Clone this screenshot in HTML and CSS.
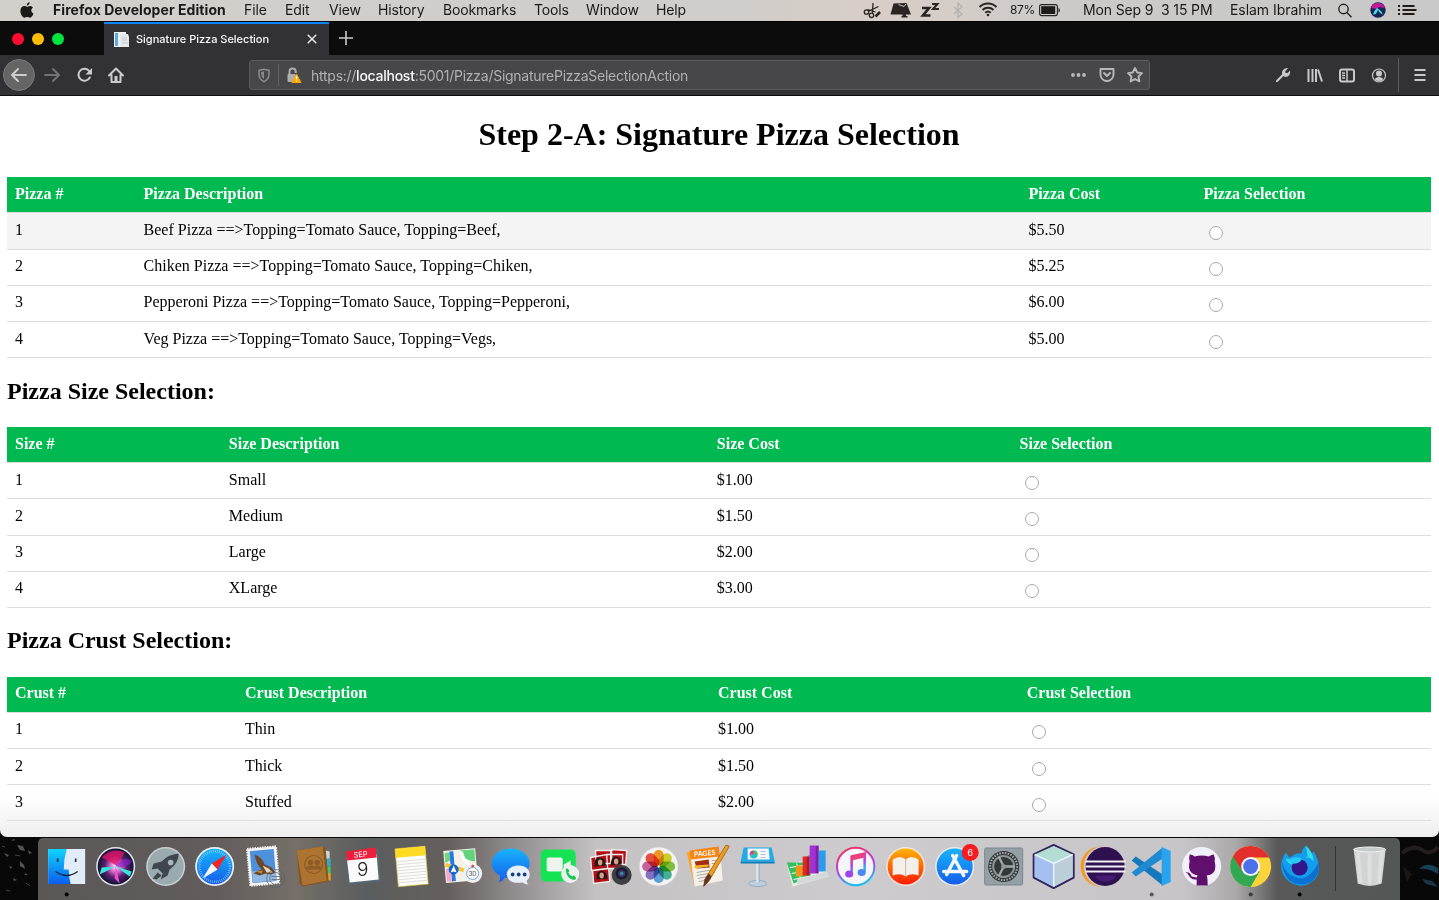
FILE: index.html
```html
<!DOCTYPE html>
<html lang="en">
<head>
<meta charset="utf-8">
<title>Signature Pizza Selection</title>
<link rel="stylesheet" href="styles.css">
</head>
<body>
<header class="menubar">
  <svg class="apple" viewBox="0 0 14 17"><path fill="#1d1917" d="M9.700 .3c.1 1.700-1.400 3.200-2.900 3.200C6.600 1.900 8.100.5 9.700.3zM7 4.700c.8 0 1.600-.8 3-.8 1.200 0 2.300.7 3 1.600-2.500 1.500-2.100 4.900.5 5.900-.6 1.700-2 4.300-3.600 4.300-1 0-1.400-.6-2.700-.6s-1.800.6-2.700.6C2.400 15.700.4 12 .4 9c0-3.200 2-4.900 3.900-4.900 1.200 0 2 .6 2.700.6z"/></svg>
  <span class="m app">Firefox Developer Edition</span>
  <span class="m w-file">File</span><span class="m w-edit">Edit</span><span class="m w-view">View</span><span class="m w-history">History</span><span class="m w-bookmarks">Bookmarks</span><span class="m w-tools">Tools</span><span class="m w-window">Window</span><span class="m">Help</span>
  <svg class="status" viewBox="862 0 142 21" fill="none" stroke="#2a2522">
    <g stroke-width="1.300"><path d="M869 11l9.500-4.500M873 3l-.5 10M867.500 9.500l8 2.500"/><circle cx="866.500" cy="12" r="2.200"/><circle cx="871.500" cy="15.300" r="2.200"/><path stroke-width="2.600" d="M875.500 16.500l4.500-4.500"/></g>
    <path fill="#2a2522" stroke="none" d="M892 3.500l13-.5 4.500 11.500h-5v1.500h1.500v1.500h-6V16h1v-1.500h-12z" transform="translate(1.500 0)"/><path stroke="#cfcac5" d="M898.500 4.500l5.500 2 2-2.500"/>
    <path stroke-width="2.700" stroke-linejoin="miter" d="M922 8h7l-6 7.500h7.500"/><path stroke-width="2" d="M932 4h5.500l-4.500 5h6"/>
    <path stroke="#b3afac" stroke-width="1.100" d="M954 7l8 7-4 3.500V3l4 3.500-8 7.500"/>
    <g stroke-width="2"><path d="M979.500 7a12 12 0 0 1 17 0M982.500 10a8 8 0 0 1 11 0M985.300 12.700a4 4 0 0 1 5.400 0"/></g><circle cx="988" cy="15" r="1.300" fill="#2a2522" stroke="none"/>
  </svg>
  <span class="m pct">87%</span>
  <svg class="battery" viewBox="0 0 22 13"><rect x=".6" y=".6" width="17.800" height="11" rx="2" fill="none" stroke="#2a2522" stroke-width="1.100"/><rect x="2.200" y="2.200" width="14" height="7.800" fill="#1e1b19"/><path d="M19.500 4v4.500q1.300-.5 1.300-2.200T19.500 4z" fill="#1e1b19"/></svg>
  <span class="m date">Mon Sep 9&nbsp; 3 15 PM</span>
  <span class="m user">Eslam Ibrahim</span>
  <svg class="tray" viewBox="1336 0 90 21"><g fill="none" stroke="#2a2522" stroke-width="1.400"><circle cx="1343.500" cy="9" r="4.700"/><path d="M1347 12.500l4.500 4.800"/></g><circle cx="1378" cy="10" r="7.700" fill="#172455"/><path d="M1371 8q1-5 7-5 5 0 7 5l-6-1-2 2z" fill="#c4189b"/><path d="M1373 14.500q1-4 4-6.500 4 2 6 6.500l-3-1.500-2-3-2 4z" fill="#45dce2"/><g fill="#1e1b19"><path d="M1398 5h2v2h-2zM1398 9h2v2h-2zM1398 13h2v2h-2zM1402.500 5h12v2h-12zM1402.500 9h14v2h-14zM1402.500 13h12v2h-12z"/></g></svg>
</header>
<div class="tabs">
  <div class="lights"><i class="red"></i><i class="amber"></i><i class="green"></i></div>
  <div class="tab">
    <svg class="favicon" viewBox="0 0 16 16"><path d="M0 0h12v15H0z" fill="#edf2f5"/><path d="M1 1h3v13H1z" fill="#5caadf"/><path d="M6 2h8l1 3v10H6z" fill="#e8e8e8"/><path d="M8 6h5M8 8h5M8 11h6" stroke="#c2cad0"/></svg>
    <span class="title">Signature Pizza Selection</span>
    <svg class="close" viewBox="0 0 10 10"><path d="M.7.700l8.600 8.600M9.300.7L.7 9.300" stroke="#e9e9ea" stroke-width="1.500"/></svg>
  </div>
  <svg class="plus" viewBox="0 0 14 14"><path d="M7 0v14M0 7h14" stroke="#c9c9ca" stroke-width="1.600"/></svg>
</div>
<div class="toolbar">
  <svg class="nav" viewBox="0 55 130 40" fill="none" stroke="#cdcdce" stroke-width="2" stroke-linecap="round" stroke-linejoin="round">
    <circle cx="19" cy="75" r="15.500" fill="#656566" stroke="#7a7a7b" stroke-width="1"/>
    <path d="M26 75H12M18 69l-6 6 6 6"/>
    <path stroke="#737374" d="M45 75h14M53 69l6 6-6 6"/>
    <path d="M89.500 71.500a6 6 0 1 0 .3 6"/><path fill="#cdcdce" stroke="none" d="M92 68v6.500h-6.500z"/>
    <path d="M109 75.500l7-7 7 7M111.500 75v7h9v-7"/><path fill="#cdcdce" stroke="none" d="M114.500 76h3v6h-3z"/>
  </svg>
  <div class="urlbar">
    <svg class="lock" viewBox="249 60 56 30"><path d="M264 69.200l5 1.200v3.800q0 5-5 7.300-5-2.300-5-7.300v-3.800z" fill="none" stroke="#8a8a8b" stroke-width="1.500"/><path d="M264 71.500v7.500q-2.800-1.800-2.800-5V72z" fill="#8a8a8b"/><path d="M278.500 64v22" stroke="#616164"/><path d="M289.500 74v-2.500a3 3 0 0 1 6.200 0V73" fill="none" stroke="#aeaeaf" stroke-width="2"/><rect x="287.500" y="74" width="8" height="8" rx="1" fill="#aeaeaf"/><path d="M296.500 74l4.500 8.500h-9z" fill="#ffa600" stroke="#ffa600" stroke-linejoin="round"/><path d="M296.500 76v3.500M296.500 80.500v1.300" stroke="#fff" stroke-width="1.300"/></svg>
    <span class="url">https://<b>localhost</b>:5001/Pizza/SignaturePizzaSelectionAction</span>
    <svg class="page-actions" viewBox="1068 60 78 30" fill="none" stroke="#b8b8b9" stroke-width="1.900"><g fill="#b8b8b9" stroke="none"><circle cx="1073" cy="75" r="1.900"/><circle cx="1078.500" cy="75" r="1.900"/><circle cx="1084" cy="75" r="1.900"/></g><path stroke-linejoin="round" d="M1100.500 69h13v5.500a6.500 6.500 0 0 1-13 0z"/><path stroke-linecap="round" stroke-linejoin="round" d="M1104 73l3 3 3-3"/><path stroke-linejoin="round" d="M1135 68l2.200 4.500 4.800.6-3.500 3.400.9 4.900-4.400-2.400-4.400 2.400.9-4.900-3.500-3.400 4.800-.6z"/></svg>
  </div>
  <svg class="tools" viewBox="1270 55 169 40" fill="none" stroke="#c8c8c9" stroke-width="2">
    <path stroke-linecap="round" stroke-width="2.200" d="M1277 81l7-7"/><path fill="#c8c8c9" stroke="none" d="M1282 75q-1-6 5-7l1 .2-2.700 3 .3 1.700 2 .2 2.500-2.600q.8 6-5 6.500z"/>
    <path d="M1308.500 69v13M1312.500 69v13M1316 69v13M1318 69.500l4 12"/>
    <rect x="1340" y="69.500" width="14" height="12" rx="2"/><path d="M1347 70v11" stroke-width="1.500"/><path stroke-width="1.300" d="M1342 73h3M1342 75.500h3M1342 78h3"/>
    <circle cx="1379" cy="75.500" r="6.500" stroke-width="1.200"/><g fill="#c8c8c9" stroke="none"><circle cx="1379" cy="73.500" r="3"/><path d="M1374.500 79q2-2 4.500-2t4.500 2q-1.800 2.300-4.500 2.300t-4.500-2.300z"/></g>
    <path stroke="#5c5c5e" stroke-width="1" d="M1398.500 58v34"/><path d="M1414.500 70h11M1414.500 75h11M1414.500 80h11"/>
  </svg>
</div>
<main class="page">
  <h1>Step 2-A: Signature Pizza Selection</h1>
  <table class="pizza">
    <thead><tr><th>Pizza #</th><th>Pizza Description</th><th>Pizza Cost</th><th>Pizza Selection</th></tr></thead>
    <tbody>
    <tr class="tall hover"><td>1</td><td>Beef Pizza ==&gt;Topping=Tomato Sauce, Topping=Beef,</td><td>$5.50</td><td><input type="radio" name="pizza"></td></tr>
    <tr><td>2</td><td>Chiken Pizza ==&gt;Topping=Tomato Sauce, Topping=Chiken,</td><td>$5.25</td><td><input type="radio" name="pizza"></td></tr>
    <tr><td>3</td><td>Pepperoni Pizza ==&gt;Topping=Tomato Sauce, Topping=Pepperoni,</td><td>$6.00</td><td><input type="radio" name="pizza"></td></tr>
    <tr class="low"><td>4</td><td>Veg Pizza ==&gt;Topping=Tomato Sauce, Topping=Vegs,</td><td>$5.00</td><td><input type="radio" name="pizza"></td></tr>
    </tbody>
  </table>
  <h2>Pizza Size Selection:</h2>
  <table class="size">
    <thead><tr><th>Size #</th><th>Size Description</th><th>Size Cost</th><th>Size Selection</th></tr></thead>
    <tbody>
    <tr class="low"><td>1</td><td>Small</td><td>$1.00</td><td><input type="radio" name="size"></td></tr>
    <tr class="tall low"><td>2</td><td>Medium</td><td>$1.50</td><td><input type="radio" name="size"></td></tr>
    <tr><td>3</td><td>Large</td><td>$2.00</td><td><input type="radio" name="size"></td></tr>
    <tr><td>4</td><td>XLarge</td><td>$3.00</td><td><input type="radio" name="size"></td></tr>
    </tbody>
  </table>
  <h2 class="second">Pizza Crust Selection:</h2>
  <table class="crust">
    <thead><tr><th>Crust #</th><th>Crust Description</th><th>Crust Cost</th><th>Crust Selection</th></tr></thead>
    <tbody>
    <tr><td>1</td><td>Thin</td><td>$1.00</td><td><input type="radio" name="crust"></td></tr>
    <tr class="low"><td>2</td><td>Thick</td><td>$1.50</td><td><input type="radio" name="crust"></td></tr>
    <tr class="low"><td>3</td><td>Stuffed</td><td>$2.00</td><td><input type="radio" name="crust"></td></tr>
    </tbody>
  </table>
</main>
<footer class="desktop">
  <svg class="rocks-l" viewBox="0 0 38 62"><g fill="#666"><path d="M11 2l4-1-1 2zM17 7l6 1 2 5-5-1zM4 15l5 2-2 2zM20 23l4 4 1 4-5-3zM9 28l3 1-1 2zM28 12l4 3-3 1zM13 40l4 2-3 1zM25 35l3 2h-3z" opacity=".8"/><path d="M2 8l3 1M26 45l4 3M6 52l4 1M15 17l5 1" stroke="#444"/></g></svg>
  <svg class="rocks-r" viewBox="0 0 39 62"><path d="M2 15q12-9 20-3t16-3" stroke="#241d1d" stroke-width="4" fill="none"/><path d="M19 31q8-8 19-1v6q-9-6-19-5z" fill="#174056"/><path d="M22 41l10 2 6 6-12-3z" fill="#1b3549"/><path d="M3 28l9 8-5 8z" fill="#1c1717"/></svg>
  <nav class="dock">
    <!-- Finder -->
    <svg class="ic" viewBox="-24.670 -28.500 49.340 62"><defs><linearGradient id="fa" x2="0" y2="1"><stop stop-color="#0fd5fb"/><stop offset="1" stop-color="#0b5ef0"/></linearGradient><linearGradient id="gb" x2="0" y2="1"><stop stop-color="#18b4fd"/><stop offset="1" stop-color="#155de9"/></linearGradient><linearGradient id="gr" x2="0" y2="1"><stop stop-color="#ffb400"/><stop offset="1" stop-color="#ff1a05"/></linearGradient></defs><rect x="-18.500" y="-17.500" width="37" height="35" fill="#e2ecf8"/><path d="M-18.500-17.500H0Q-3-7-3 3H2Q2 10 4 17.500H-18.500z" fill="url(#fa)"/><path d="M-9-8v3.500M9-8v3.500" stroke="#1a2b40" stroke-width="1.600"/><path d="M-11 5Q0 13 11 5" fill="none" stroke="#12223a" stroke-width="1.500"/><circle cy="28" r="2" fill="#000"/></svg>
    <!-- Siri -->
    <svg class="ic" viewBox="-24.670 -28.500 49.340 62"><defs><radialGradient id="si"><stop stop-color="#fff"/><stop offset=".25" stop-color="#ef7adb"/><stop offset=".6" stop-color="#5b226f"/><stop offset="1" stop-color="#0e1234"/></radialGradient></defs><circle r="19.500" fill="#e8e8ea"/><circle r="18" fill="url(#si)"/><path d="M-14-9Q-4-20 9-14L1-1z" fill="#e01568" opacity=".8"/><path d="M0-1Q10-12 16-5 12 2 0 0z" fill="#8b1fc4" opacity=".7"/><path d="M0 0L-16 8-14 1zM0 0l16 5-2 5z" fill="#37e4de"/><path d="M0-1l4 18-5-5z" fill="#f14fd1"/></svg>
    <!-- Launchpad -->
    <svg class="ic" viewBox="-24.670 -28.500 49.340 62"><circle r="19.500" fill="#c8d0d2"/><circle r="18" fill="#9aabb0"/><path d="M13-13Q2-12-4-5L-12-3-14 3-8 2-3 7-5 13 2 9 4 3Q13-3 13-13z" fill="#3e474b"/><path d="M-8 6L-4 9-9 13-13 12z" fill="#3e474b"/><circle cx="5" cy="-4" r="2.800" fill="#a9b8bd"/></svg>
    <!-- Safari -->
    <svg class="ic" viewBox="-24.670 -28.500 49.340 62"><circle r="19.500" fill="#edf0f2"/><circle r="17.800" fill="url(#gb)"/><circle r="15.300" fill="none" stroke="#9edcff" stroke-width="2.500" stroke-dasharray=".6 1.400"/><path d="M12-12L3 3-3-3z" fill="#f32424"/><path d="M-12 12L-3-3 3 3z" fill="#f5f6f8"/></svg>
    <!-- Mail -->
    <svg class="ic" viewBox="-24.670 -28.500 49.340 62"><g transform="rotate(-5)"><rect x="-15" y="-19" width="29" height="37" fill="#f4f4f4" stroke="#f4f4f4" stroke-width="2" stroke-dasharray="1.500 1"/><rect x="-12.500" y="-16.500" width="24" height="32" fill="#4d90dc"/><path d="M-12 4h24v11h-24z" fill="#92b9e4"/></g><path d="M-9-12Q-2-10 1-2L8 1l4 5-5 2-5-1-6 2-6-2q3-3 8-4-6-6-7-15z" fill="#6b4827"/><path d="M-1-1l6 3 4 4-6 0z" fill="#e3d7c2"/><path d="M-8 5l7-1-1 3z" fill="#c98a35"/><g fill="none" stroke="#555e65" stroke-width="1" opacity=".7"><circle cx="12" cy="12" r="9"/><circle cx="12" cy="12" r="6"/><path d="M8 10h8M8 13h8"/></g></svg>
    <!-- Contacts -->
    <svg class="ic" viewBox="-24.670 -28.500 49.340 62"><path d="M12-16l4 1v7l-4 1z" fill="#ccd6dd"/><path d="M13-8l4 0v8h-4z" fill="#30a9c9"/><path d="M13 0h4v8h-4z" fill="#45c564"/><path d="M13 7h4v7h-4z" fill="#ed9a24"/><path d="M-17-16L9-20l3 2 3 33-26 5-3-3z" fill="#855622"/><path d="M-17-16L9-20l4 34-24 5z" fill="#ad7431"/><circle cy="-2" r="9" fill="none" stroke="#8e5b25" stroke-width="1.200"/><g fill="#8e5b25"><circle cx="-3" cy="-4" r="2.700"/><circle cx="3.500" cy="-4" r="2.700"/><path d="M-8 3q1-4 5-4t5 4zM0 3q0-4 4-4t4 4z"/></g></svg>
    <!-- Calendar -->
    <svg class="ic" viewBox="-24.670 -28.500 49.340 62"><path d="M-18-12L16-18l2 33-33 3z" fill="#566773"/><path d="M-16-10L14-12l2 25-29 3z" fill="#fafafa"/><path d="M-17-15L13-19l1 10-30 3z" fill="#ed1e3b"/><text class="cal-m" x="-1" y="-9.500" transform="rotate(-5)">SEP</text><text class="cal-d" y="9">9</text></svg>
    <!-- Notes -->
    <svg class="ic" viewBox="-24.670 -28.500 49.340 62"><g transform="rotate(-5)"><rect x="-15" y="-19" width="30" height="38" fill="#fcfcfb" stroke="#d6bd41" stroke-width=".7"/><path d="M-15-19h30v9h-30z" fill="#fdda23"/><path d="M-14-6h28M-14-3h28M-14 0h28M-14 3h28M-14 6h28M-14 9h28M-14 12h28M-14 15h28" stroke="#dedede"/></g></svg>
    <!-- Maps -->
    <svg class="ic" viewBox="-24.670 -28.500 49.340 62"><g transform="rotate(-5)"><rect x="-17" y="-17" width="32" height="32" fill="#f5f1e9"/><path d="M0-16h14v12Q3-5 0-16z" fill="#62d27b"/><path d="M-16-15h5v8l-5 2zM3 4h11v5H3z" fill="#72d684"/><path d="M-9-16v30" stroke="#2679de" stroke-width="4"/><path d="M-16-3L12 8" stroke="#f7c638" stroke-width="4"/><path d="M-16 1h5v13h-5z" fill="#f0aaca"/><path d="M1-15Q3 0 14 1" stroke="#fff" stroke-width="3" fill="none"/></g><circle cx="-8" cy="3" r="5" fill="#1267cb"/><path d="M-8-1l3 7-3-1-3 1z" fill="#fff"/><circle cx="11" cy="7" r="9.500" fill="#eff0f1"/><circle cx="11" cy="7" r="6" fill="#fafafa" stroke="#73a8c6"/><text class="m3d" x="11" y="9.500">3D</text><circle cx="11" cy="-.5" r="1.300" fill="#ee2e34"/></svg>
    <!-- Messages -->
    <svg class="ic" viewBox="-24.670 -28.500 49.340 62"><path d="M0-18c11 0 19 7 19 15S11 12 0 12q-3 0-6-1-2 4-6 5 2-3 1-7-8-4-8-12c0-8 8-15 19-15z" fill="url(#gb)"/><path d="M8-1c7 0 11 4 11 9q0 4-3 6 0 3 2 4-4 0-6-2-15 2-16-8c0-5 5-9 12-9z" fill="#e7f0f8"/><g fill="#183f89"><circle cx="2" cy="8" r="1.900"/><circle cx="8" cy="8" r="1.900"/><circle cx="14" cy="8" r="1.900"/></g></svg>
    <!-- FaceTime -->
    <svg class="ic" viewBox="-24.670 -28.500 49.340 62"><rect x="-19" y="-17" width="35" height="32" rx="5" fill="#16e354"/><rect x="-13" y="-9" width="16" height="14" rx="2" fill="#ecf4ed"/><path d="M4-2l7-4V5L4 2z" fill="#e7f1e9"/><circle cx="10.500" cy="7.500" r="9" fill="#edf0ef"/><path d="M6 3q1-2 3 0l.5 2-1 1q1.500 3 4 4l1.500-1 2 1.500q1 2-1 3Q7 13 6 3z" fill="#14c64a"/></svg>
    <!-- Photo Booth -->
    <svg class="ic" viewBox="-24.670 -28.500 49.340 62"><g fill="#b30f17" stroke="#f2eeee" stroke-width="1.300"><path d="M-14-16h15v13h-15zM2-17l15 1-1 14-14-1zM-19-9l16-3 1 14-16 2zM-3-12H13V2H-2zM-17 4L-1 2l1 13-16 2z"/></g><g fill="#261817"><path d="M-15 0q-1-10 5-9 6 0 6 8zM1-1q0-10 6-9 5 1 5 8zM-13 13q-1-9 5-9 5 1 6 8z"/></g><g fill="#d8a086"><ellipse cx="-9.500" cy="-4" rx="2.200" ry="3"/><ellipse cx="6.500" cy="-5" rx="2.200" ry="3"/><ellipse cx="-8" cy="9" rx="2.200" ry="3"/></g><circle cx="12" cy="8.500" r="10" fill="#3d3f42"/><circle cx="12" cy="7" r="6" fill="#171d2b"/><circle cx="12" cy="7" r="3.500" fill="#493370"/><circle cx="12" cy="7" r="1.800" fill="#2794a1"/></svg>
    <!-- Photos -->
    <svg class="ic photos" viewBox="-24.670 -28.500 49.340 62"><circle r="19.500" fill="#f3f3f3" stroke="#c7c7c7" stroke-width=".6"/><rect x="-5" y="-16.500" width="10" height="15.500" rx="5" fill="#fa9d24"/><rect x="-5" y="-16.500" width="10" height="15.500" rx="5" fill="#d2d72b" transform="rotate(45)"/><rect x="-5" y="-16.500" width="10" height="15.500" rx="5" fill="#84c940" transform="rotate(90)"/><rect x="-5" y="-16.500" width="10" height="15.500" rx="5" fill="#4bb999" transform="rotate(135)"/><rect x="-5" y="-16.500" width="10" height="15.500" rx="5" fill="#62a7df" transform="rotate(180)"/><rect x="-5" y="-16.500" width="10" height="15.500" rx="5" fill="#8c78c8" transform="rotate(225)"/><rect x="-5" y="-16.500" width="10" height="15.500" rx="5" fill="#cf68a8" transform="rotate(270)"/><rect x="-5" y="-16.500" width="10" height="15.500" rx="5" fill="#f05347" transform="rotate(315)"/></svg>
    <!-- Pages -->
    <svg class="ic" viewBox="-24.670 -28.500 49.340 62"><path d="M-21-14L11-19 14 14-13 19z" fill="#fba51f"/><path d="M-17-8L13-11 15 14-13 20z" fill="#f5f1e8"/><path d="M-18-16L11-20 12-10-17-7z" fill="#f58517"/><text class="pages" x="-2" y="-11" transform="rotate(-5)">PAGES</text><path d="M-13-5l14-2 1 8-13 1z" fill="#a33014"/><path d="M-13-1l14-1v2l-14 2z" fill="#fbb62c"/><path d="M-11 6L7 3M-11 9L7 6M-10 12L5 9M-9 15L3 13M4-6h8M4-3h7" stroke="#aaa9a5"/><path d="M18-21q4-1 3 2L1 15l-5 5 1-7z" fill="#ed9c18" stroke="#925016" stroke-width=".7"/><path d="M1 7l3 3L0 16l-4 4 1-7z" fill="#5a3424"/></svg>
    <!-- Keynote -->
    <svg class="ic" viewBox="-24.670 -28.500 49.340 62"><ellipse cy="17" rx="9" ry="3" fill="#bfcfdd" stroke="#8eabc0"/><path d="M0-4v20" stroke="#d9e5ef" stroke-width="3"/><path d="M1.500-4v20" stroke="#8aabc2"/><path d="M-14-19h28l3 14h-34z" fill="#22a9e8"/><path d="M-17-5h34v2h-34z" fill="#087fba"/><path d="M-10-18h21l1 11h-22z" fill="#f4f8fa"/><circle cx="-4" cy="-12" r="4" fill="#24c2ca"/><path d="M-4-12v-4q4 0 4 4z" fill="#55c44c"/><path d="M-4-12h-4q0-4 4-4z" fill="#ea38a1"/><path d="M3-15h5M3-12h5M3-9h5" stroke="#b3c3cd"/></svg>
    <!-- Numbers -->
    <svg class="ic" viewBox="-24.670 -28.500 49.340 62"><path d="M-20-3L14-8 22 10-14 20z" fill="#e6efe7"/><path d="M-20-4h16L5 9-13 17z" fill="#31c05e"/><path d="M-17 1l33-5M-15 7l32-6M-13 13L20 6M-10-3l5 20" stroke="#fff"/><path d="M-10 13L20 5l2 5-31 8z" fill="#d4d8d9"/><path d="M12-16h7V5h-7z" fill="#299cf0"/><path d="M-11-1h7V10h-7z" fill="#fb9317"/><path d="M-4-10h7V9h-7z" fill="#e22729"/><path d="M3-21h9V7H3z" fill="#a431d4"/><path d="M0-10l3-2V8L0 9zM9-20l3-1V6L9 7z" fill="#000" opacity=".25"/></svg>
    <!-- iTunes -->
    <svg class="ic" viewBox="-24.670 -28.500 49.340 62"><defs><linearGradient id="it" x2=".3" y2="1"><stop stop-color="#fa314f"/><stop offset=".6" stop-color="#b83ee9"/><stop offset="1" stop-color="#20baf3"/></linearGradient></defs><circle r="18.700" fill="#f6f5f9" stroke="url(#it)" stroke-width="2"/><path d="M-4 6V-10L9-13V5" fill="none" stroke="url(#it)" stroke-width="2.500"/><path d="M-4-10L9-13v4L-4-6z" fill="#ef4082"/><ellipse cx="-6.500" cy="7.500" rx="4" ry="3.500" fill="#9b45ea"/><ellipse cx="6" cy="6" rx="4" ry="3.500" fill="#4b89f2"/></svg>
    <!-- Books -->
    <svg class="ic" viewBox="-24.670 -28.500 49.340 62"><circle r="19.500" fill="#eee8e4"/><circle r="18" fill="url(#gr)"/><path d="M-13-7Q-5-12 0-7 5-12 13-7V9Q5 6 0 10-5 6-13 9z" fill="#f3efea"/><path d="M0-7V10" stroke="#c9b9aa"/></svg>
    <!-- App Store -->
    <svg class="ic" viewBox="-24.670 -28.500 49.340 62"><circle r="19.500" fill="#e7ebef"/><circle r="18" fill="url(#gb)"/><g stroke="#f2f7fc" stroke-width="3.500" stroke-linecap="round"><path d="M2-11L-8 8M-2-11L9 9M-11 5H12"/></g><circle cx="15.500" cy="-14" r="8.500" fill="#f51c20"/><text class="badge" x="15.500" y="-10.700">6</text></svg>
    <!-- System Preferences -->
    <svg class="ic" viewBox="-24.670 -28.500 49.340 62"><rect x="-19" y="-18.500" width="38" height="37" rx="1.500" fill="#94a0a5" stroke="#77878e"/><circle r="15.500" fill="#34383a"/><circle r="13.500" fill="none" stroke="#a8afb2" stroke-width="2" stroke-dasharray="1.500 1.300"/><circle r="10.500" fill="none" stroke="#8c9497" stroke-width="2"/><path d="M0 0L-5-10M0 0h11M0 0L-5 10" stroke="#a1a8ab" stroke-width="2.300"/><circle r="2.500" fill="#8e9699"/></svg>
    <!-- NetBeans -->
    <svg class="ic" viewBox="-24.670 -28.500 49.340 62"><path d="M0-21.500L20-12v23L0 21.500-20 11v-23z" fill="#c2e3e5" stroke="#32265e" stroke-width="2" stroke-linejoin="round"/><path d="M0-3L-19-12V10.500L0 20.500z" fill="#a4bff0"/><path d="M0-3L19-12V10.500L0 20.500z" fill="#bccfd9"/><path d="M0-20.500L19-12 0-3-19-12z" fill="#b3ddd3"/><path d="M-19-12L0-3 19-12M0-3v23" fill="none" stroke="#e8f4ff" stroke-width="1.500"/></svg>
    <!-- Eclipse -->
    <svg class="ic" viewBox="-24.670 -28.500 49.340 62"><circle cx="-2" r="20" fill="#f9961b"/><circle cx="1.500" r="20.500" fill="#ccc9cb"/><circle cx="2.500" r="19.500" fill="#30114f"/><path d="M-8 9h22q-3 6-11 6t-11-6z" fill="#451b74"/><path d="M-17-5h40M-17 0h40M-17 5h40" stroke="#f2eff6" stroke-width="2.200"/></svg>
    <!-- VS Code -->
    <svg class="ic" viewBox="-24.670 -28.500 49.340 62"><path d="M-20-6l4-4 27 18V19z" fill="#1478bd"/><path d="M-20 6l4 4L11-8v-11z" fill="#1f8ad2"/><path d="M10-19.500l9 4v31l-9 4z" fill="#27a4ed"/><circle cy="28" r="2" fill="#58575a"/></svg>
    <!-- GitHub -->
    <svg class="ic" viewBox="-24.670 -28.500 49.340 62"><circle r="19.500" fill="#f1effa"/><path d="M-12-12q3 0 5 2 7-2 14 0 3-2 5-2 2 4 1 7 3 13-8 14 1 2 1 10h-11v-6q-6 1-9-6l-2-1q4-1 6 4l5 1 1-2q-11-2-8-14-1-4 0-7z" fill="#600f6c"/></svg>
    <!-- Chrome -->
    <svg class="ic" viewBox="-24.670 -28.500 49.340 62"><circle r="20.500" fill="#ffd33b"/><path d="M0 0L-17.750-10.250A20.500 20.500 0 0 0 0 20.500L9 5z" fill="#33a852"/><path d="M0-9h18.400A20.500 20.500 0 0 0-17.750-10.250L-8 5z" fill="#e42e2b"/><circle r="9.500" fill="#f8f8fb"/><circle r="7.500" fill="#4b70e8"/><circle cy="28" r="2" fill="#39393b"/></svg>
    <!-- Firefox Developer Edition -->
    <svg class="ic" viewBox="-24.670 -28.500 49.340 62"><path d="M6-21q4 4 5 9l3-3q10 17 1 28-14 13-29-1-9-12 0-26l4 5 5-3q4-2 7-1 0-4 4-8z" fill="#149ced"/><path d="M-18-5q4 13 14 16Q8 16 19-4q2 19-16 22-18 1-21-23z" fill="#0871d3"/><path d="M6-21q8 7 8 16-3-4-8-5 4 7 0-11zM-14-8q8 2 15 1l-5 5q-8 1-10-6z" fill="#2edfed"/><circle cx="0" cy="1" r="8" fill="#32168b"/><path d="M-8-3q9 1 10-5-8-3-13 1z" fill="#27c8f5"/><circle cy="28" r="2" fill="#000"/></svg>
    <span class="sep"></span>
    <svg class="ic trash" viewBox="-24.670 -28.500 49.340 62"><path d="M-16-17h32l-4 34q-12 5-24 0z" fill="#d2d4d4"/><path d="M-12-14L-9 17M0-13v31M12-14L9 17" stroke="#dddede" stroke-width="4"/><ellipse cy="-17" rx="16" ry="2.500" fill="#c7caca" stroke="#f1f2f2"/></svg>
  </nav>
</footer>
</body>
</html>
```
FILE: styles.css
```css
* { box-sizing: border-box; }
body { margin: 0; width: 1439px; height: 900px; overflow: hidden; background: #090909; font-family: Inter, "Liberation Sans", sans-serif; display: flex; flex-direction: column; }
svg { display: block; flex: none; }
.menubar { height: 21px; flex: none; display: flex; align-items: center; background: linear-gradient(90deg, #d3cfcb, #d0cdca 50%, #d8cec7 62%, #cbcac9 75%, #c8c8c8); color: #1b1817; font-size: 14px; line-height: 20px; white-space: nowrap; }
.apple { width: 14px; height: 17px; margin: 0 19px 1px 20px; }
.m { flex: none; padding-bottom: 1px; letter-spacing: -.13px; }
.app { width: 191px; font-weight: 700; letter-spacing: .06px; }
.w-file { width: 41px; }
.w-edit { width: 44px; }
.w-view { width: 49px; }
.w-history { width: 65px; }
.w-bookmarks { width: 91px; }
.w-tools { width: 52px; }
.w-window { width: 70px; }
.status { width: 142px; height: 21px; margin-left: auto; }
.pct { width: 35px; padding-left: 6px; font-size: 12px; letter-spacing: -.3px; }
.battery { width: 22px; height: 13px; }
.date { width: 147px; margin-left: 22px; }
.user { width: 106px; letter-spacing: -.05px; }
.tray { width: 90px; height: 21px; margin-right: 13px; }
.tabs { height: 34px; flex: none; display: flex; align-items: center; background: #0c0c0d; border-top: 1px solid #000; }
.lights { width: 104px; padding-left: 12px; display: flex; gap: 8px; }
.lights i { width: 12px; height: 12px; border-radius: 50%; }
.red { background: #ff0a30; }
.amber { background: #ffbd05; }
.green { background: #00e43f; }
.tab { width: 225px; height: 33px; display: flex; align-items: center; padding: 0 12px 0 10px; background: #323234; border-top: 2px solid #0a84ff; }
.favicon { width: 16px; height: 16px; }
.title { flex: 1; margin: -2px 0 0 6px; color: #f9f9fa; font-size: 11px; font-weight: 500; letter-spacing: -.02px; white-space: nowrap; }
.close { width: 10px; height: 10px; margin-top: -1px; }
.plus { width: 14px; height: 14px; margin: -1px 0 0 10px; }
.toolbar { height: 41px; flex: none; display: flex; background: #323234; border-bottom: 1px solid #0c0c0d; }
.nav { width: 130px; height: 40px; }
.urlbar { width: 901px; height: 30px; margin: 5px 0 0 119px; display: flex; align-items: center; background: #474749; border: 1px solid #5c5c5f; border-radius: 3px; }
.lock { width: 56px; height: 30px; margin-left: -1px; }
.url { flex: 1; padding: 2px 0 0 6px; color: #b1b1b3; font-size: 14px; line-height: 20px; letter-spacing: -.26px; white-space: nowrap; }
.url b { color: #f9f9fa; font-weight: 500; }
.page-actions { width: 78px; height: 30px; margin-right: 3px; }
.tools { width: 169px; height: 40px; margin-left: auto; }
.page { height: 741px; flex: none; padding: 0 8px 0 7px; background: linear-gradient(#fff 700px, #eee 741px); border-radius: 0 0 7px 7px; color: #000; font: 16px/18px "Liberation Serif", serif; }
h1 { height: 81px; margin: 0; padding-top: 20px; font-size: 32px; line-height: 37px; text-align: center; }
h2 { height: 69px; margin: 0; padding-top: 19px; font-size: 24px; line-height: 28px; }
.second { padding-top: 18px; }
table { width: 1424px; table-layout: fixed; border-collapse: separate; border-spacing: 0; }
th, td { height: 36px; padding: 7px 8px 0; border-bottom: 1px solid #ddd; text-align: left; vertical-align: top; }
th { padding-top: 8px; background: #00ba51; color: #fff; }
.crust th { padding-top: 7px; }
.tall td { height: 37px; }
.hover td { padding-top: 8px; background: #f4f4f4; }
.low td { padding-top: 8px; }
input { appearance: none; display: block; width: 14px; height: 14px; margin: 5px 0 0 5px; background: #fff; border: 1px solid #a8a8a8; border-radius: 50%; }
.pizza th:nth-child(1) { width: 128.600px; }
.pizza th:nth-child(2) { width: 885px; }
.pizza th:nth-child(3) { width: 175px; }
.size th:nth-child(1) { width: 213.800px; }
.size th:nth-child(2) { width: 488px; }
.size th:nth-child(3) { width: 302.800px; }
.crust th:nth-child(1) { width: 230px; }
.crust th:nth-child(2) { width: 473px; }
.crust th:nth-child(3) { width: 308.800px; }
.desktop { height: 63px; flex: none; padding-top: 1px; display: grid; grid-template-columns: 38px 1362px 39px; background: #080808; }
.rocks-l { grid-column: 1; width: 38px; height: 62px; }
.rocks-r { grid-column: 3; grid-row: 1; width: 39px; height: 62px; }
.dock { grid-column: 2; grid-row: 1; display: flex; padding-left: 4px; border-radius: 5px 5px 0 0; background: linear-gradient(90deg, #5b5757 0, #625d5c 13%, #756f68 19%, #5a5e5e 24%, #655f5c 30%, #918d8e 35%, #c5c2c4 41%, #cecbce 60%, #c8c5c8 84%, #aaa8a9 88%, #595959 91%, #535756 100%); }
.ic { width: 49.330px; height: 62px; }
.sep { width: 1px; height: 45px; margin: 8px 0 0 10px; background: #303434; }
.trash { margin-left: 9px; }
.cal-m { font: 7.500px Inter, sans-serif; fill: #fff; text-anchor: middle; }
.cal-d { font: 300 19px Inter, sans-serif; fill: #222; text-anchor: middle; }
.m3d { font: 6px Inter, sans-serif; fill: #555; text-anchor: middle; }
.pages { font: 700 7px Lato, sans-serif; fill: #fff; text-anchor: middle; }
.badge { font: 9.500px Inter, sans-serif; fill: #fff; text-anchor: middle; }
.photos rect { mix-blend-mode: multiply; }
```
